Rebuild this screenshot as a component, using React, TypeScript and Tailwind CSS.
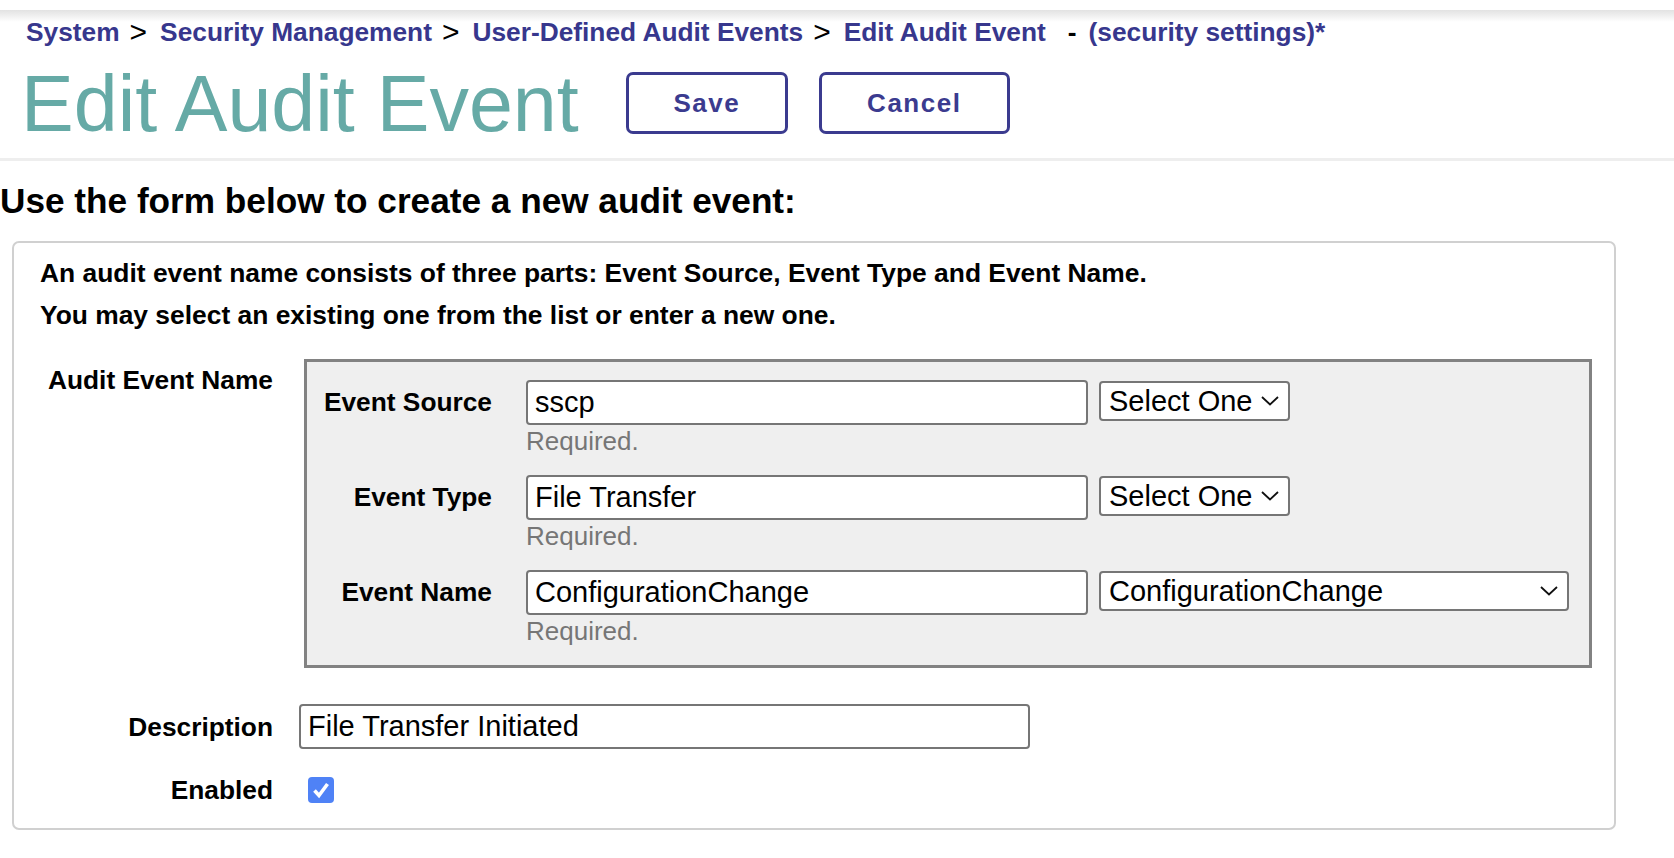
import { useState } from 'react'

const crumbs = ['System', 'Security Management', 'User-Defined Audit Events']

function Chevron() {
  return (
    <svg width="20" height="11" viewBox="0 0 20 11" className="pointer-events-none absolute right-[10px] top-1/2 -translate-y-1/2">
      <polyline points="2,1.5 10,9 18,1.5" fill="none" stroke="#111" strokeWidth="1.8" />
    </svg>
  )
}

function PickList({ value, options, width }: { value: string; options: string[]; width: string }) {
  return (
    <div className={`relative mt-[1px] ${width}`}>
      <select
        defaultValue={value}
        className="h-[40px] w-full appearance-none rounded-[4px] border-2 border-[#767676] bg-white pl-[8px] text-[29px] text-black outline-none"
      >
        {options.map((o) => (
          <option key={o}>{o}</option>
        ))}
      </select>
      <Chevron />
    </div>
  )
}

const rows = [
  { label: 'Event Source', value: 'sscp', pick: 'Select One', opts: ['Select One', 'sscp'], w: 'w-[191px]' },
  { label: 'Event Type', value: 'File Transfer', pick: 'Select One', opts: ['Select One', 'File Transfer'], w: 'w-[191px]' },
  {
    label: 'Event Name',
    value: 'ConfigurationChange',
    pick: 'ConfigurationChange',
    opts: ['Select One', 'ConfigurationChange'],
    w: 'w-[470px]',
  },
]

export default function App() {
  const [enabled, setEnabled] = useState(true)

  return (
    <div className="min-h-screen bg-white pt-[10px] font-['Liberation_Sans',Arial,sans-serif] text-black">
      {/* Header */}
      <div className="border-b-[3px] border-[#eeeeee] bg-[linear-gradient(#e2e2e2,#ffffff_12px)] pt-[6px] pb-[14px]">
        <div className="flex items-center whitespace-nowrap pl-[26px] text-[26.3px] leading-[32px]">
          {crumbs.map((c) => (
            <span key={c} className="flex items-center">
              <a className="font-bold text-[#37378d]">{c}</a>
              <span className="ml-[10px] mr-[13px] text-[30px] font-normal">&gt;</span>
            </span>
          ))}
          <a className="font-bold text-[#37378d]">Edit Audit Event</a>
          <span className="ml-[22px] mr-[12px] font-bold">-</span>
          <span className="font-bold text-[#37378d]">(security settings)*</span>
        </div>
        <div className="mt-[16px] flex items-center pl-[21px]">
          <h1 className="whitespace-nowrap text-[79px] leading-[80px] font-normal text-[#66aaa6]">Edit Audit Event</h1>
          <button className="ml-[47px] -mt-[2px] h-[62px] w-[162px] rounded-[7px] border-[3px] border-[#3b3b8f] bg-white text-[26px] font-bold tracking-[1.5px] text-[#3b3b8f]">
            Save
          </button>
          <button className="ml-[31px] -mt-[2px] h-[62px] w-[191px] rounded-[7px] border-[3px] border-[#3b3b8f] bg-white text-[26px] font-bold tracking-[1.5px] text-[#3b3b8f]">
            Cancel
          </button>
        </div>
      </div>

      <h2 className="mt-[19px] text-[35.2px] leading-[42px] font-bold">Use the form below to create a new audit event:</h2>

      {/* Form panel */}
      <div className="mt-[19px] ml-[12px] w-[1604px] rounded-[7px] border-2 border-[#d0d0d0] pt-[9px] pb-[22px] pl-[26px]">
        <p className="text-[26.4px] leading-[42px] font-bold">
          An audit event name consists of three parts: Event Source, Event Type and Event Name.
        </p>
        <p className="text-[26.4px] leading-[42px] font-bold">You may select an existing one from the list or enter a new one.</p>

        <div className="mt-[23px] grid grid-cols-[233px_1fr] gap-x-[26px] text-[26.3px] leading-[32px]">
          <div className="whitespace-nowrap pt-[5px] text-right font-bold">Audit Event Name</div>
          <div className="ml-[5px] w-[1288px] border-[3px] border-[#828282] bg-[#efefef] pt-[18px] pb-[18px] pl-[14px]">
            <div className="flex flex-col gap-[18px]">
              {rows.map((r) => (
                <div key={r.label} className="flex items-start">
                  <div className="flex h-[43px] w-[171px] items-center justify-end whitespace-nowrap font-bold">{r.label}</div>
                  <div className="ml-[34px] flex flex-col">
                    <input
                      defaultValue={r.value}
                      className="h-[45px] w-[562px] rounded-[4px] border-2 border-[#767676] bg-white px-[7px] text-[29px] text-black outline-none"
                    />
                    <span className="text-[26px] text-[#767676]">Required.</span>
                  </div>
                  <div className="ml-[11px]">
                    <PickList value={r.pick} options={r.opts} width={r.w} />
                  </div>
                </div>
              ))}
            </div>
          </div>

          <div className="mt-[36px] flex h-[45px] items-center justify-end font-bold">Description</div>
          <div className="mt-[36px]">
            <input
              defaultValue="File Transfer Initiated"
              className="h-[45px] w-[731px] rounded-[4px] border-2 border-[#767676] bg-white px-[7px] text-[29px] text-black outline-none"
            />
          </div>

          <div className="mt-[25px] text-right font-bold">Enabled</div>
          <div className="mt-[25px] flex h-[32px] items-center">
            <button
              onClick={() => setEnabled(!enabled)}
              className={`ml-[9px] flex h-[26px] w-[26px] items-center justify-center rounded-[4px] ${
                enabled ? 'bg-[#4f82f6]' : 'border-2 border-[#767676] bg-white'
              }`}
              aria-label="Enabled"
            >
              {enabled && (
                <svg width="22" height="22" viewBox="0 0 22 22">
                  <polyline points="4.5,11.5 9,16.5 17.5,5" fill="none" stroke="#fff" strokeWidth="3.6" />
                </svg>
              )}
            </button>
          </div>
        </div>
      </div>
    </div>
  )
}
